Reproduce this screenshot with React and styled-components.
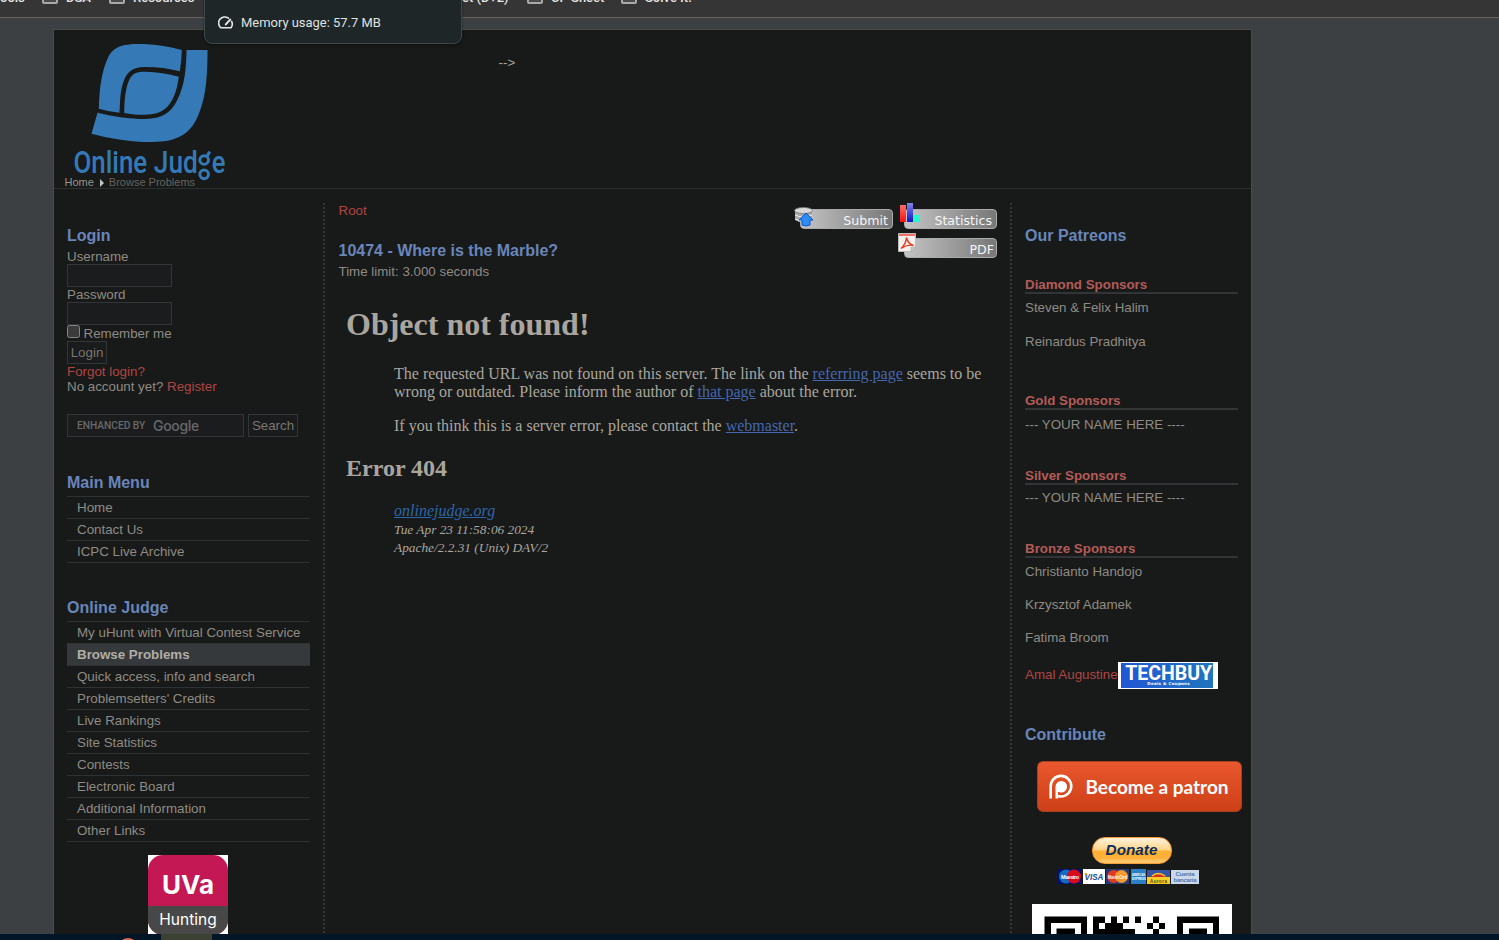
import React from 'react';
import styled, { createGlobalStyle } from 'styled-components';

const sans = '"Liberation Sans", Arial, sans-serif';
const serif = '"Liberation Serif", "Times New Roman", serif';

const GlobalStyle = createGlobalStyle`
  * { box-sizing: border-box; }
  body { margin: 0; overflow: hidden; background: #3c4042; }
  svg { display: block; }
`;

const Screen = styled.div`
  width: 1499px;
  height: 940px;
  overflow: hidden;
  display: flex;
  flex-direction: column;
  position: relative;
  color: #8f8b84;
  font: 13.33px/15px ${sans};
`;

const BookmarkBar = styled.nav`
  height: 18px;
  flex: none;
  overflow: hidden;
  background: #353535;
  border-bottom: 1px solid #676561;
  display: flex;
  align-items: flex-start;
`;
const Bookmark = styled.span`
  display: flex;
  align-items: flex-start;
  flex: none;
  gap: 8px;
  width: ${p => p.$w}px;
  margin-top: -11px;
  height: 18px;
  white-space: nowrap;
  color: #e6e6e6;
  font: 500 13px/18px Roboto, sans-serif;
`;
const FolderIcon = styled.i`
  width: 16px;
  height: 14px;
  margin-top: 1px;
  border: 2px solid #aaa8a8;
  border-radius: 2px;
  background: #4b494b;
`;

const MemoryTip = styled.div`
  position: absolute;
  left: 204px;
  top: -12px;
  width: 258px;
  height: 56px;
  padding: 13px 0 0 13px;
  display: flex;
  align-items: center;
  gap: 7px;
  border: 1px solid #3b4749;
  border-radius: 8px;
  background: #1f2628;
  color: #dfe1e0;
  font: 12.95px/18px Roboto, sans-serif;
  box-shadow: 0 1px 3px #0007;
`;

const Desktop = styled.div`
  flex: 1;
  min-height: 0;
  overflow: hidden;
  padding: 11px 0 0 53px;
  background: #3c4042;
`;
const Page = styled.div`
  width: 1199px;
  height: 1000px;
  border: 1px solid #4d4c48;
  background: #181a19;
`;
const Header = styled.header`
  height: 159px;
  border-bottom: 1px solid #2c2f30;
  display: grid;
  grid-template-columns: 444.5px 1fr;
`;
const Brand = styled.div`
  padding: 11px 0 0 10.5px;
`;
const Stray = styled.span`
  padding-top: 25px;
  color: #a9a59d;
`;
const Crumbs = styled.div`
  display: flex;
  align-items: center;
  margin-top: -5px;
  font-size: 11px;
  line-height: 13px;
  color: #66625d;
  position: relative;
`;
const CrumbHome = styled.span`
  color: #97938b;
`;
const CrumbArrow = styled.i`
  margin: 0 5px 0 6px;
  border-left: 4px solid #c4c4c4;
  border-top: 4px solid transparent;
  border-bottom: 4px solid transparent;
`;

const Columns = styled.div`
  display: flex;
  padding: 14px 0 0 13px;
  height: 840px;
`;
const LeftColumn = styled.aside`
  width: 243px;
  flex: none;
  padding-top: 24px;
`;
const Divider = styled.i`
  flex: none;
  width: 2px;
  margin: 0 13px;
  background: repeating-linear-gradient(#333637 0 2px, transparent 2px 4px);
`;
const Main = styled.main`
  width: 659px;
  flex: none;
`;
const RightColumn = styled.aside`
  width: 226px;
  flex: none;
  padding-top: 24px;
`;

const Heading = styled.h3`
  margin: ${p => p.$mt || 0}px 0 ${p => p.$mb || 0}px;
  font: bold 16px/18px ${sans};
  color: #6985b9;
`;
const Line = styled.div`
  margin-top: ${p => p.$mt || 0}px;
  height: 15px;
  white-space: nowrap;
`;
const RedLink = styled.a`
  color: #af4543;
`;
const TextBox = styled.div`
  display: flex;
  align-items: center;
  width: ${p => p.$w}px;
  height: 23px;
  padding-left: 9px;
  border: 1px solid #333638;
  background: #1b1c1e;
`;
const PushButton = styled.button`
  width: ${p => p.$w}px;
  height: 23px;
  padding: 0;
  display: block;
  border: 1px solid #333638;
  background: #1a1b1c;
  color: #7b766e;
  font: 13.33px/15px ${sans};
`;
const Remember = styled.label`
  display: flex;
  height: 16px;
  gap: 3.5px;
  line-height: 17px;
`;
const CheckBox = styled.i`
  width: 13px;
  height: 13px;
  border: 1px solid #858585;
  border-radius: 2.5px;
  background: #3b3b3b;
`;
const SearchRow = styled.div`
  display: flex;
  gap: 4px;
  margin: 20px 0 37px;
`;
const Enhanced = styled.span`
  font: 500 10.2px/14px Roboto, sans-serif;
  color: #686969;
  width: 76px;
  white-space: nowrap;
`;
const GoogleWord = styled.span`
  font: 500 14px/20px Inter, sans-serif;
  letter-spacing: -0.3px;
  color: #686969;
`;

const Menu = styled.ul`
  list-style: none;
  margin: 4px 0 ${p => p.$mb}px;
  padding: 0;
  border-top: 1px solid #2f3233;
`;
const MenuItem = styled.li`
  height: 22px;
  padding-left: 10px;
  line-height: 21px;
  white-space: nowrap;
  border-bottom: 1px solid #2f3233;
  color: ${p => (p.$active ? '#b1ada5' : '#8f8b84')};
  font-weight: ${p => (p.$active ? 'bold' : 'normal')};
  background: ${p => (p.$active ? '#35393c' : 'transparent')};
`;

const HuntTile = styled.div`
  width: 80px;
  height: 80px;
  margin: 13px 0 0 81px;
  background: #fff;
`;
const HuntBadge = styled.div`
  height: 80px;
  border-radius: 15px;
  overflow: hidden;
  background: #c41854;
  color: #fff;
  text-align: center;
  font: bold 26px/60px Inter, sans-serif;
`;
const HuntCaption = styled.div`
  margin-top: -9px;
  height: 29px;
  background: #484848;
  font: 15.5px/27px Inter, sans-serif;
`;

const ProblemHead = styled.div`
  display: flex;
  justify-content: space-between;
  height: 95px;
  padding-left: 0.5px;
`;
const Actions = styled.div`
  width: 204px;
  display: flex;
  flex-wrap: wrap;
  align-content: flex-start;
  justify-content: flex-end;
  gap: 3px 4px;
`;
const Action = styled.div`
  width: 100px;
  height: 26px;
  display: grid;
  align-items: end;
  position: relative;
`;
const ActionLabel = styled.div`
  height: 20px;
  margin-left: 7px;
  padding-right: ${p => p.$pr || 4}px;
  border: 1px solid #aaa;
  border-radius: 4px;
  background: linear-gradient(90deg, #c4c4c4, #777);
  color: #f5f5f5;
  text-align: right;
  font: 12.6px/22px "DejaVu Sans", sans-serif;
`;
const ActionIcon = styled.svg`
  position: absolute;
  left: 1px;
  top: 0;
`;

const Frame = styled.section`
  padding: 8px;
  font: 16px/18px ${serif};
  color: #aaa69f;
  h1 { margin: 0 0 22px; font-size: 32px; line-height: 37px; }
  h2 { margin: 20px 0 20px; font-size: 24px; line-height: 27px; }
  a { text-decoration: underline; color: #4566b0; }
`;
const Indented = styled.p`
  margin: ${p => p.$mt || 0}px 0 0 48px;
`;
const Address = styled.address`
  margin-left: 48px;
  a { color: #2c66a8; }
`;
const Small = styled.span`
  display: block;
  margin-top: ${p => p.$mt || 0}px;
  font-size: 13.33px;
`;

const SponsorTitle = styled.div`
  width: 213px;
  height: 17px;
  margin-top: ${p => p.$mt}px;
  border-bottom: 2px solid #323536;
  color: #b45a58;
  font-weight: bold;
`;
const TechRow = styled.div`
  display: flex;
  margin: 17px 0 37px;
  line-height: 25px;
`;
const TechLogo = styled.div`
  width: 100px;
  height: 27px;
  background: #fff;
  padding: 1px 5px 1px 3px;
`;
const TechFace = styled.div`
  height: 25px;
  padding-left: 4px;
  background: linear-gradient(90deg, #2157d6, #2174bd);
  color: #fff;
  text-align: center;
  font: bold 19.5px/22px Roboto, sans-serif;
`;
const TechSub = styled.div`
  margin-top: -4px;
  font: bold 4px/5px "DejaVu Sans", sans-serif;
  letter-spacing: 0.3px;
`;
const Patron = styled.div`
  width: 205px;
  height: 51px;
  margin: 17px 0 0 12.4px;
  padding-left: 11px;
  display: flex;
  align-items: center;
  gap: 12px;
  border: 1px solid #a8401f;
  border-radius: 6px;
  background: linear-gradient(#e9582f, #cd3f16);
  color: #fff;
  font: bold 19px/24px Lato, sans-serif;
  white-space: nowrap;
`;
const Donate = styled.div`
  width: 80px;
  height: 27px;
  margin: 25px 0 0 66.5px;
  border: 1px solid #ff9933;
  border-radius: 13px;
  background: linear-gradient(#fff3dc, #ffd58d 45%, #ffae2f 55%, #ffb13c 80%, #ffcf80);
  color: #0c2f5d;
  text-align: center;
  font: italic bold 15.3px/24px ${sans};
`;
const Cards = styled.svg`
  margin: 5px 0 0 33px;
`;
const Qr = styled.svg`
  margin: 20px 0 0 7px;
`;

const Taskbar = styled.footer`
  height: 6px;
  flex: none;
  overflow: hidden;
  background: #031628;
  display: flex;
  position: relative;
`;
const TaskDot = styled.i`
  width: 20px;
  height: 20px;
  margin: 4px 23px 0 118px;
  border-radius: 50%;
  background: #d3694a;
`;
const TaskActive = styled.i`
  width: 51px;
  height: 6px;
  background: #3c4233;
`;

const bookmarks = [['DSA', 67], ['Resources', 106], ['Interview', 97], ['Watch Now', 100], ['Target (D+2)', 115], ['CP Sheet', 94], ['Solve It!', 90]];
const mainMenu = ['Home', 'Contact Us', 'ICPC Live Archive'];
const judgeMenu = ['My uHunt with Virtual Contest Service', 'Browse Problems', 'Quick access, info and search', "Problemsetters' Credits", 'Live Rankings', 'Site Statistics', 'Contests', 'Electronic Board', 'Additional Information', 'Other Links'];

const Logo = () => (
  <svg width="162" height="140" viewBox="43.5 48 486 420" fill="#357ab7">
    <path d="M145 251C147 190 153 135 176 91C195 57 235 56 280 57C320 58 358 66 394 75Q393 107 388 139Q335 125 280 126C248 127 230 140 220 167C208 198 209 231 207 263Q174 260 145 251Z" />
    <path d="M408 75H471C471 145 468 205 448 259C425 323 390 351 302 351C241 351 180 341 123 326L141 263C184 273 235 282 285 282C334 281 361 264 380 226C404 179 407 128 408 75Z" />
    <path d="M221 264C222 226 224 190 237 163C247 143 260 140 285 140Q337 141 385 155C379 199 367 232 343 252C323 269 287 270 260 269Q239 268 221 264Z" />
    <g stroke="#357ab7" fill="none" strokeWidth="9">
      <circle cx="461" cy="405" r="13" />
      <circle cx="461" cy="448" r="13" />
      <path d="M469 394L478 380" />
    </g>
    <g fontFamily="Roboto, sans-serif" fontWeight="500" fontSize="96">
      <text x="69" y="445" textLength="221" lengthAdjust="spacingAndGlyphs">Online</text>
      <text x="310" y="445" textLength="132" lengthAdjust="spacingAndGlyphs">Jud</text>
      <text x="484" y="445" textLength="41" lengthAdjust="spacingAndGlyphs">e</text>
    </g>
  </svg>
);

const Gauge = () => (
  <svg width="16" height="16" viewBox="0 0 16 16" fill="none" stroke="#e6e8e8" strokeWidth="1.6" strokeLinecap="round">
    <path d="M10.4 3.2A6 6 0 0 0 3 12.8H13A6 6 0 0 0 13.6 6.4" />
    <path d="M7.8 9.4L12.2 4.6" strokeWidth="2" />
  </svg>
);

const PatreonMark = () => (
  <svg width="24" height="26" viewBox="0 0 24 26" fill="none">
    <path d="M1.7 24.5V12.5A10.3 10.3 0 1 1 12 22.5Q10.5 22.5 9 22" stroke="#fff" strokeWidth="2.6" />
    <path d="M6.5 24.5V13A5.8 5.8 0 1 1 12 18.5Q10.5 18.5 9 17.8V24.5Z" fill="#fff" />
  </svg>
);

const SubmitIcon = () => (
  <ActionIcon width="20" height="26" viewBox="0 0 20 26">
    <path d="M1 7V17Q9 22 18 17V7Z" fill="#a8a8a8" />
    <path d="M1 12Q9 16 18 12M1 16Q9 20 18 16" stroke="#eee" fill="none" />
    <ellipse cx="9.5" cy="7.5" rx="9" ry="3" fill="#d9d9d9" stroke="#777" strokeWidth=".8" />
    <path d="M12 10L19 17H16V22Q12 24 8 22V17H5Z" fill="#2e8df5" stroke="#0d55cf" />
  </ActionIcon>
);
const StatsIcon = () => (
  <ActionIcon width="22" height="26" viewBox="0 0 22 26">
    <defs>
      <linearGradient id="red" x2="0" y2="1"><stop stopColor="#ff6c6c" /><stop offset="1" stopColor="#ff1010" /></linearGradient>
      <linearGradient id="blue" x2="0" y2="1"><stop stopColor="#8585ea" /><stop offset="1" stopColor="#1212c8" /></linearGradient>
    </defs>
    <path d="M2 2H8V19H2Z" fill="url(#red)" />
    <path d="M9 0H15V19H9Z" fill="url(#blue)" />
    <path d="M16 12H22V19H16Z" fill="#25f8cd" />
  </ActionIcon>
);
const PdfIcon = () => (
  <ActionIcon width="19" height="26" viewBox="0 0 19 26">
    <path d="M.5 1.5H17.5V15L13 19.5H.5Z" fill="#f3f0ee" stroke="#bbb" />
    <path d="M1 2H17V4H1Z" fill="#f47068" />
    <path d="M3 16.5Q8 12 8.5 5.5Q10 12 15.5 13.5Q9 12 3 16.5Z" fill="none" stroke="#e43b20" strokeWidth="1.4" />
    <path d="M13 19.5V15H17.5Z" fill="#ccc" stroke="#999" strokeWidth=".5" />
  </ActionIcon>
);

const PaymentCards = () => (
  <Cards width="142" height="15" viewBox="0 0 142 15" fontFamily="Liberation Sans" fontWeight="bold">
    <rect width="24" height="15" fill="#04106b" />
    <circle cx="8" cy="7.5" r="7" fill="#126bc4" /><circle cx="16" cy="7.5" r="7" fill="#d60b1c" />
    <text x="3" y="9.5" fontSize="5.4" fill="#fff" textLength="18">Maestro</text>
    <rect x="25" width="22" height="15" fill="#fff" />
    <text x="26.5" y="11" fontSize="9.5" fontStyle="italic" fill="#174c92" textLength="19" lengthAdjust="spacingAndGlyphs">VISA</text>
    <path d="M26 4h3l1 3z" fill="#e7a020" />
    <rect x="48" width="23" height="15" fill="#273a72" />
    <circle cx="55.5" cy="7.5" r="6.5" fill="#df3a25" /><circle cx="63.5" cy="7.5" r="6.5" fill="#f39a31" />
    <text x="50" y="9.5" fontSize="5" fill="#fff" textLength="19" lengthAdjust="spacingAndGlyphs">MasterCard</text>
    <rect x="73" width="15" height="15" fill="#2b80c5" />
    <text x="74" y="6.5" fontSize="4.4" fill="#fff" textLength="13" lengthAdjust="spacingAndGlyphs">AMERICAN</text>
    <text x="74" y="10.5" fontSize="4.4" fill="#fff" textLength="14" lengthAdjust="spacingAndGlyphs">EXPRESS</text>
    <rect x="89" y="1" width="23" height="14" fill="#3656a4" />
    <path d="M92 9A9 7 0 0 1 109 9Z" fill="#db2b2a" /><rect x="89" y="8" width="23" height="7" fill="#f5cf24" />
    <path d="M94 7Q100 2 107 7" stroke="#f5cf24" fill="none" strokeWidth="1.5" />
    <text x="92" y="13.5" fontSize="4.5" fill="#524a20" textLength="17">Aurora</text>
    <rect x="113" y="1" width="28" height="14" fill="#ccd8e9" />
    <text x="117.5" y="7" fontSize="6" fill="#4b78ae" textLength="19">Cuenta</text>
    <text x="115.5" y="13" fontSize="6" fill="#4b78ae" textLength="23">bancaria</text>
  </Cards>
);

const QrCode = () => (
  <Qr width="200" height="60" viewBox="0 0 200 60">
    <rect width="200" height="60" fill="#fff" />
    <path d="M12.5 12.5H55V60H49V19H19V60H12.5ZM145 12.5H187V60H181V19H151V60H145ZM24.5 24.5H43V60H24.5ZM157 24.5H175V60H157Z" fill="#000" />
    <path d="M61 12.5H73V19H67V25H73V30H61ZM79 12.5H85V19H91V25H79V19H73V25H79V12.5ZM91 12.5H97V19H91ZM103 12.5H109V19H103ZM73 25H103V30H73ZM121 12.5H127V19H121ZM115 19H121V25H115ZM127 19H133V25H127ZM121 25H127V30H121Z" fill="#000" />
  </Qr>
);

export default function App() {
  return (
    <Screen>
      <GlobalStyle />
      <BookmarkBar>
        <Bookmark $w={42}>ools</Bookmark>
        {bookmarks.map(([name, w]) => (
          <Bookmark key={name} $w={w}><FolderIcon />{name}</Bookmark>
        ))}
      </BookmarkBar>
      <Desktop>
        <Page>
          <Header>
            <Brand>
              <Logo />
              <Crumbs><CrumbHome>Home</CrumbHome><CrumbArrow />Browse Problems</Crumbs>
            </Brand>
            <Stray>--&gt;</Stray>
          </Header>
          <Columns>
            <LeftColumn>
              <Heading $mb={4}>Login</Heading>
              <Line>Username</Line>
              <TextBox $w={105} />
              <Line>Password</Line>
              <TextBox $w={105} />
              <Remember><CheckBox />Remember me</Remember>
              <PushButton $w={40}>Login</PushButton>
              <Line><RedLink>Forgot login?</RedLink></Line>
              <Line>No account yet? <RedLink>Register</RedLink></Line>
              <SearchRow>
                <TextBox $w={177}><Enhanced>ENHANCED BY</Enhanced><GoogleWord>Google</GoogleWord></TextBox>
                <PushButton $w={50}>Search</PushButton>
              </SearchRow>
              <Heading>Main Menu</Heading>
              <Menu $mb={36}>{mainMenu.map(t => <MenuItem key={t}>{t}</MenuItem>)}</Menu>
              <Heading>Online Judge</Heading>
              <Menu $mb={0}>{judgeMenu.map(t => <MenuItem key={t} $active={t === 'Browse Problems'}>{t}</MenuItem>)}</Menu>
              <HuntTile><HuntBadge>UVa<HuntCaption>Hunting</HuntCaption></HuntBadge></HuntTile>
            </LeftColumn>
            <Divider />
            <Main>
              <ProblemHead>
                <div>
                  <Line><RedLink>Root</RedLink></Line>
                  <Heading $mt={24} $mb={4}>10474 - Where is the Marble?</Heading>
                  <Line>Time limit: 3.000 seconds</Line>
                </div>
                <Actions>
                  <Action><SubmitIcon /><ActionLabel>Submit</ActionLabel></Action>
                  <Action><StatsIcon /><ActionLabel>Statistics</ActionLabel></Action>
                  <Action><PdfIcon /><ActionLabel $pr={2}>PDF</ActionLabel></Action>
                </Actions>
              </ProblemHead>
              <Frame>
                <h1>Object not found!</h1>
                <Indented>The requested URL was not found on this server. The link on the <a>referring page</a> seems to be wrong or outdated. Please inform the author of <a>that page</a> about the error.</Indented>
                <Indented $mt={16}>If you think this is a server error, please contact the <a>webmaster</a>.</Indented>
                <h2>Error 404</h2>
                <Address>
                  <a>onlinejudge.org</a>
                  <Small $mt={1}>Tue Apr 23 11:58:06 2024<br />Apache/2.2.31 (Unix) DAV/2</Small>
                </Address>
              </Frame>
            </Main>
            <Divider />
            <RightColumn>
              <Heading>Our Patreons</Heading>
              <SponsorTitle $mt={32}>Diamond Sponsors</SponsorTitle>
              <Line $mt={6}>Steven &amp; Felix Halim</Line>
              <Line $mt={19}>Reinardus Pradhitya</Line>
              <SponsorTitle $mt={44}>Gold Sponsors</SponsorTitle>
              <Line $mt={7}>--- YOUR NAME HERE ----</Line>
              <SponsorTitle $mt={36}>Silver Sponsors</SponsorTitle>
              <Line $mt={5}>--- YOUR NAME HERE ----</Line>
              <SponsorTitle $mt={36}>Bronze Sponsors</SponsorTitle>
              <Line $mt={6}>Christianto Handojo</Line>
              <Line $mt={18}>Krzysztof Adamek</Line>
              <Line $mt={18}>Fatima Broom</Line>
              <TechRow>
                <RedLink>Amal Augustine</RedLink>
                <TechLogo><TechFace>TECHBUY<TechSub>Deals &amp; Coupons</TechSub></TechFace></TechLogo>
              </TechRow>
              <Heading>Contribute</Heading>
              <Patron><PatreonMark />Become a patron</Patron>
              <Donate>Donate</Donate>
              <PaymentCards />
              <QrCode />
            </RightColumn>
          </Columns>
        </Page>
      </Desktop>
      <Taskbar><TaskDot /><TaskActive /></Taskbar>
      <MemoryTip><Gauge />Memory usage: 57.7 MB</MemoryTip>
    </Screen>
  );
}
